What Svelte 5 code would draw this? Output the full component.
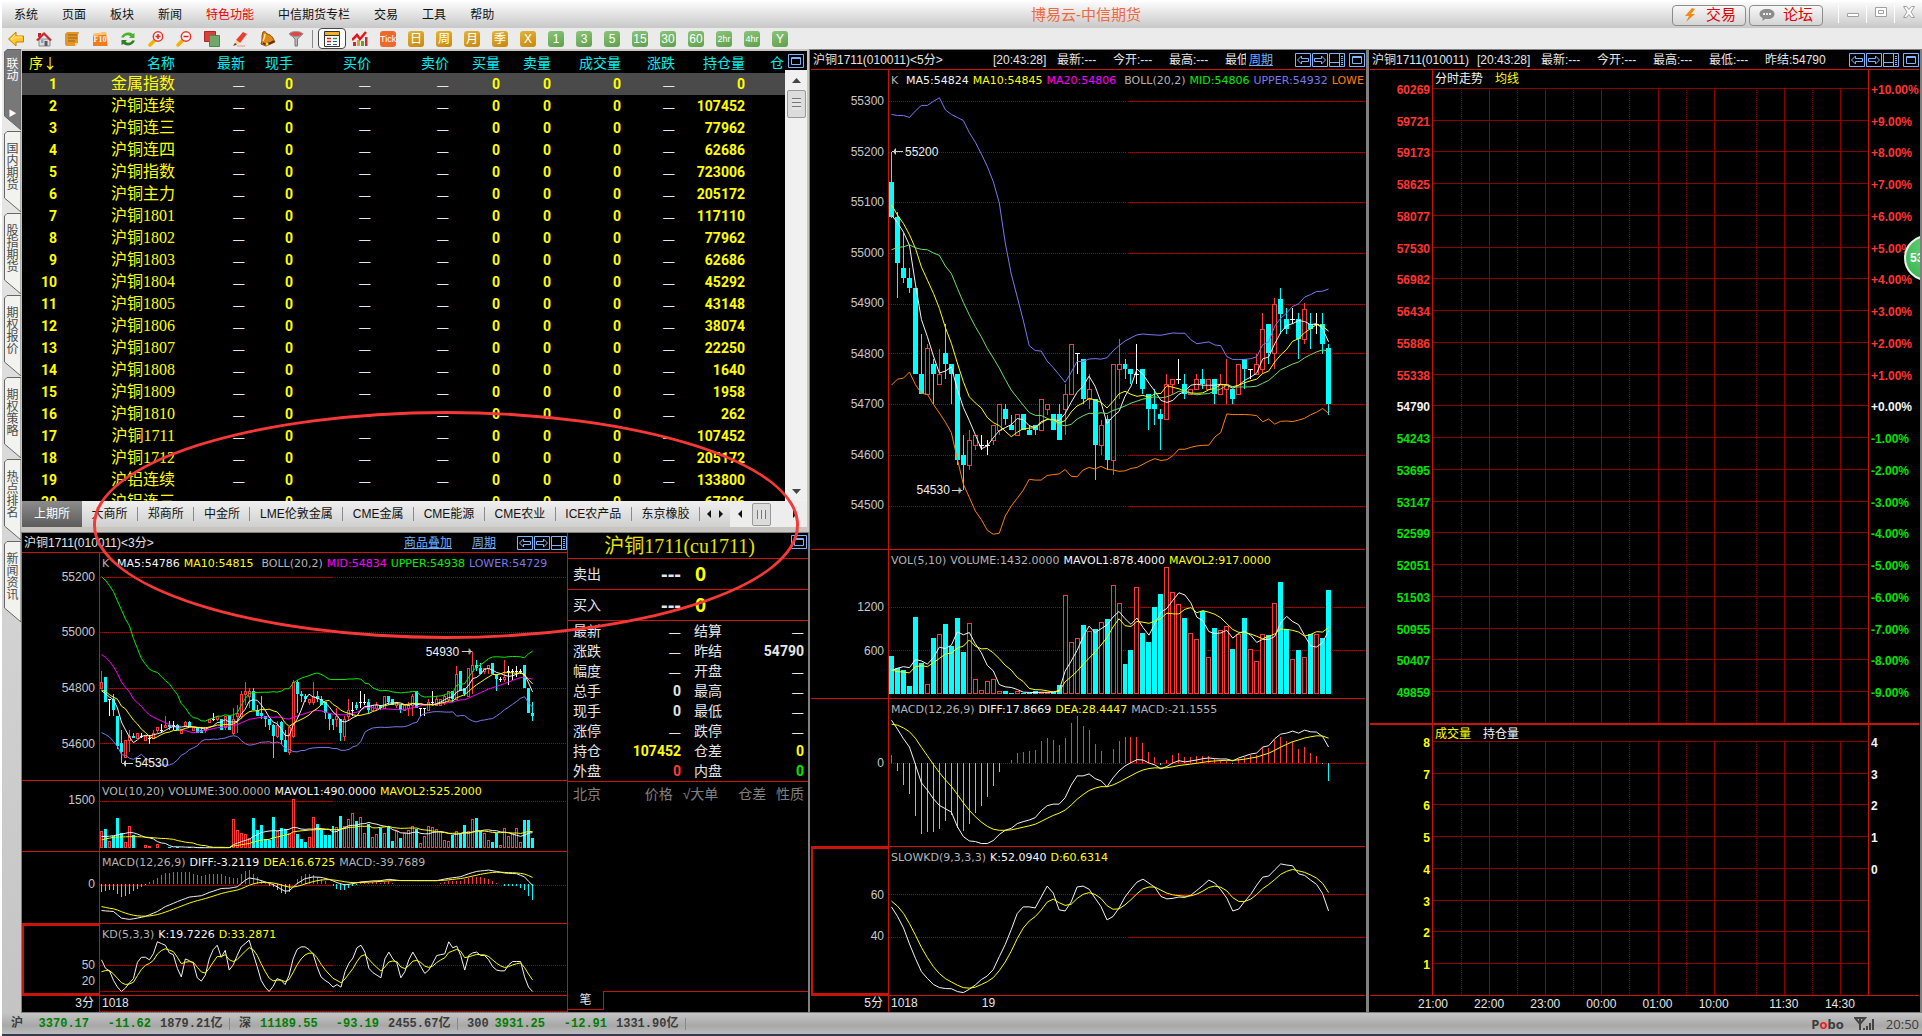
<script lang="ts">
	type Candle = [kind: string, high: number, top: number, bottom: number, low: number];
	type Line = { color: string; values: number[] };

	const menu = ['系统', '页面', '板块', '新闻', '特色功能', '中信期货专栏', '交易', '工具', '帮助'];
	const periods = ['Tick', '日', '周', '月', '季', 'X', '1', '3', '5', '15', '30', '60', '2hr', '4hr', 'Y'];
	const sideTabs = ['联动', '国内期货', '股指期货', '期权报价', '期权策略', '热点排名', '新闻资讯'];
	const markets = ['上期所', '大商所', '郑商所', '中金所', 'LME伦敦金属', 'CME金属', 'CME能源', 'CME农业', 'ICE农产品', '东京橡胶'];

	const contracts: [string, number][] = [
		['金属指数', 0],
		['沪铜连续', 107452],
		['沪铜连三', 77962],
		['沪铜连四', 62686],
		['沪铜指数', 723006],
		['沪铜主力', 205172],
		['沪铜1801', 117110],
		['沪铜1802', 77962],
		['沪铜1803', 62686],
		['沪铜1804', 45292],
		['沪铜1805', 43148],
		['沪铜1806', 38074],
		['沪铜1807', 22250],
		['沪铜1808', 1640],
		['沪铜1809', 1958],
		['沪铜1810', 262],
		['沪铜1711', 107452],
		['沪铜1712', 205172],
		['沪铝连续', 133800],
		['沪铝连三', 67206]
	];

	const quote = [
		['最新', '—', '', '结算', '—', ''],
		['涨跌', '—', '', '昨结', '54790', ''],
		['幅度', '—', '', '开盘', '—', ''],
		['总手', '0', '', '最高', '—', ''],
		['现手', '0', '', '最低', '—', ''],
		['涨停', '—', '', '跌停', '—', ''],
		['持仓', '107452', 'yellow', '仓差', '0', 'yellow'],
		['外盘', '0', 'red', '内盘', '0', 'green']
	];

	const indexes = [
		['沪', '3370.17', '-11.62', '1879.21亿'],
		['深', '11189.55', '-93.19', '2455.67亿'],
		['300', '3931.25', '-12.91', '1331.90亿']
	];

	const GREY = '#b4b4b4';
	const WHITE = '#f4f4f4';
	const YELLOW = '#ffff00';
	const GREEN = '#00f000';
	const MAGENTA = '#ff00ff';
	const BLUE = '#7878f0';
	const ORANGE = '#ff8000';

	// prices are offsets from 54000
	const five: Candle[] = [
		['d', 1200, 1140, 1070, 1070], ['d', 1080, 1070, 980, 910], ['d', 1040, 970, 950, 940], ['d', 970, 950, 930, 920],
		['d', 930, 930, 760, 760], ['d', 840, 760, 720, 720], ['u', 820, 810, 720, 720], ['d', 790, 780, 760, 700],
		['u', 810, 760, 740, 740], ['d', 860, 800, 780, 750], ['d', 780, 780, 760, 700], ['d', 760, 760, 590, 580],
		['d', 640, 600, 580, 530], ['u', 650, 630, 580, 570], ['u', 640, 640, 620, 610], ['w', 640, 620, 620, 610],
		['w', 630, 620, 620, 600], ['u', 660, 660, 630, 620], ['u', 700, 700, 650, 640], ['d', 700, 690, 670, 660],
		['d', 680, 660, 650, 650], ['u', 680, 680, 640, 640], ['d', 680, 680, 650, 650], ['d', 660, 650, 640, 640],
		['d', 660, 660, 650, 640], ['u', 710, 710, 650, 650], ['u', 700, 700, 690, 680], ['d', 680, 680, 650, 650],
		['d', 700, 680, 630, 630], ['u', 740, 720, 690, 640], ['u', 820, 820, 720, 720], ['w', 800, 800, 800, 760],
		['d', 790, 790, 710, 700], ['u', 760, 730, 710, 690], ['d', 710, 710, 620, 550], ['u', 670, 660, 620, 600],
		['d', 680, 670, 590, 570], ['u', 780, 780, 590, 560], ['u', 830, 780, 770, 710], ['d', 790, 780, 770, 750],
		['d', 770, 770, 760, 740], ['w', 820, 760, 760, 740], ['d', 770, 770, 730, 720], ['d', 720, 720, 690, 650],
		['d', 730, 700, 690, 660], ['d', 690, 680, 670, 610], ['u', 760, 740, 670, 670], ['u', 750, 750, 740, 720],
		['w', 790, 750, 750, 740], ['d', 760, 740, 720, 710], ['u', 730, 730, 720, 720], ['u', 760, 750, 730, 730],
		['d', 770, 750, 740, 730], ['u', 750, 750, 730, 730], ['d', 750, 750, 720, 700], ['u', 760, 740, 720, 720],
		['u', 790, 740, 730, 700], ['d', 730, 730, 710, 700], ['u', 780, 780, 720, 720], ['d', 790, 790, 770, 730],
		['w', 770, 770, 770, 750], ['u', 800, 780, 760, 760], ['u', 880, 850, 770, 760], ['d', 860, 860, 800, 780],
		['u', 910, 900, 800, 770], ['d', 930, 910, 880, 840], ['d', 890, 870, 850, 840], ['w', 890, 870, 870, 860],
		['d', 880, 870, 830, 790], ['u', 900, 890, 830, 820], ['d', 880, 860, 850, 810], ['w', 880, 860, 860, 840],
		['d', 880, 860, 820, 800], ['d', 820, 810, 700, 680]
	];

	const three: Candle[] = [
		['u', 860, 820, 800, 800], ['d', 840, 840, 750, 750], ['w', 760, 760, 760, 700], ['d', 780, 760, 720, 700],
		['d', 700, 700, 590, 580], ['d', 650, 600, 570, 530], ['u', 610, 610, 550, 550], ['u', 650, 630, 610, 570],
		['d', 640, 630, 620, 620], ['u', 640, 640, 620, 620], ['w', 640, 630, 630, 620], ['u', 630, 630, 610, 610],
		['w', 630, 620, 620, 600], ['u', 650, 640, 620, 620], ['u', 660, 660, 650, 640], ['w', 670, 650, 650, 640],
		['u', 700, 670, 660, 660], ['d', 680, 670, 660, 650], ['w', 680, 670, 670, 650], ['d', 670, 670, 650, 650],
		['u', 650, 650, 640, 640], ['u', 680, 680, 670, 660], ['d', 680, 680, 660, 660], ['u', 660, 660, 650, 650],
		['d', 660, 660, 640, 640], ['d', 660, 650, 640, 640], ['u', 660, 660, 650, 640], ['u', 690, 690, 680, 680],
		['w', 710, 690, 690, 680], ['u', 700, 700, 690, 680], ['d', 690, 690, 650, 650], ['u', 700, 700, 660, 650],
		['d', 700, 700, 650, 650], ['u', 730, 690, 640, 630], ['u', 740, 710, 700, 640], ['u', 790, 780, 700, 690],
		['u', 820, 790, 780, 740], ['u', 800, 790, 770, 730], ['d', 800, 790, 720, 720], ['d', 740, 720, 700, 700],
		['d', 770, 710, 700, 690], ['d', 700, 700, 690, 660], ['d', 690, 690, 670, 650], ['d', 670, 670, 630, 550],
		['u', 680, 670, 630, 620], ['d', 680, 680, 610, 600], ['d', 650, 610, 570, 570], ['u', 660, 660, 570, 560],
		['u', 830, 820, 630, 620], ['d', 830, 820, 780, 710], ['d', 790, 780, 770, 750], ['d', 780, 770, 760, 750],
		['u', 760, 760, 750, 740], ['u', 820, 770, 750, 740], ['d', 790, 770, 760, 750], ['d', 770, 760, 740, 740],
		['d', 750, 750, 710, 690], ['d', 710, 710, 690, 650], ['d', 690, 690, 670, 650], ['u', 730, 700, 690, 660],
		['d', 690, 690, 640, 610], ['u', 700, 690, 630, 610], ['u', 760, 720, 700, 680], ['w', 750, 720, 720, 700],
		['d', 750, 740, 730, 720], ['w', 790, 750, 750, 730], ['w', 780, 750, 750, 740], ['d', 760, 750, 720, 710],
		['u', 740, 740, 720, 720], ['u', 750, 740, 730, 720], ['d', 740, 740, 730, 720], ['u', 770, 770, 730, 730],
		['d', 770, 770, 750, 740], ['d', 760, 760, 740, 740], ['u', 750, 750, 740, 730], ['d', 740, 740, 720, 710],
		['u', 740, 740, 720, 720], ['u', 750, 740, 730, 700], ['u', 780, 770, 740, 700], ['d', 790, 790, 730, 730],
		['w', 730, 730, 730, 700], ['w', 730, 730, 730, 700], ['u', 760, 750, 720, 720], ['w', 790, 750, 750, 740],
		['u', 770, 760, 740, 740], ['u', 760, 760, 740, 740], ['u', 780, 770, 750, 740], ['u', 790, 790, 760, 750],
		['d', 790, 790, 760, 750], ['u', 880, 850, 760, 760], ['d', 860, 860, 790, 790], ['d', 800, 800, 780, 770],
		['u', 870, 870, 770, 770], ['u', 930, 880, 860, 780], ['d', 900, 880, 870, 860], ['d', 890, 870, 850, 850],
		['u', 870, 870, 860, 850], ['u', 880, 880, 870, 850], ['d', 890, 890, 850, 850], ['d', 850, 850, 830, 790],
		['w', 840, 830, 830, 820], ['u', 900, 840, 830, 820], ['w', 880, 860, 860, 810], ['w', 870, 860, 860, 830],
		['w', 880, 860, 860, 840], ['w', 870, 860, 860, 850], ['d', 880, 880, 800, 800], ['d', 800, 800, 710, 710],
		['d', 750, 710, 700, 680]
	];

	const fiveVolume = [
		520, 356, 328, 110, 1067, 424, 132, 780, 830, 971, 657, 1053, 575, 980, 200, 50, 173, 200, 36, 41, 14, 36, 14, 14, 36,
		32, 32, 32, 123, 1363, 720, 775, 958, 871, 903, 994, 1040, 1500, 1254, 410, 602, 1473, 848, 725, 1204, 1382, 1746,
		1404, 1240, 1053, 844, 761, 1149, 502, 917, 885, 939, 616, 834, 1053, 611, 447, 830, 821, 1254, 1546, 903, 474, 602,
		502, 834, 830, 780, 1432
	];

	const threeVolume = [
		517, 590, 207, 362, 960, 465, 186, 672, 414, 20, 20, 80, 50, 20, 134, 20, 20, 15, 15, 15, 10, 12, 15, 10, 12, 10, 10,
		12, 10, 12, 10, 15, 20, 900, 548, 465, 434, 310, 930, 548, 713, 269, 238, 1003, 517, 620, 590, 465, 1550, 434, 290,
		176, 331, 993, 755, 569, 414, 393, 672, 641, 1024, 672, 900, 1117, 827, 982, 465, 755, 331, 434, 620, 465, 672, 207,
		517, 310, 465, 548, 672, 600, 155, 362, 672, 641, 590, 517, 238, 207, 414, 517, 465, 724, 517, 900, 962, 517, 465,
		258, 176, 465, 100, 620, 362, 465, 620, 176, 869, 869, 300
	];

	const fiveDiff = [
		129, 102, 73, 48, -5, -60, -82, -108, -128, -138, -148, -192, -222, -235, -237, -243, -243, -234, -216, -203, -197,
		-183, -177, -172, -165, -144, -129, -124, -124, -105, -67, -39, -39, -33, -47, -54, -72, -45, -24, -9, 1, 10, 9, 0,
		-6, -18, -10, 0, 7, 3, 6, 9, 13, 15, 13, 12, 12, 6, 15, 21, 27, 30, 48, 52, 73, 87, 90, 96, 90, 99, 94, 93, 80, 48
	];

	const threeDiff = spread([
		[0, -80], [3, -83], [5, -103], [7, -107], [9, -103], [11, -98], [14, -83], [16, -68], [18, -58], [20, -48], [22, -39],
		[25, -35], [27, -25], [30, -13], [32, -12], [34, -8], [36, 12], [37, 19], [39, 15], [41, 7], [43, -1], [45, -15],
		[46, -21], [47, -20], [49, 2], [51, 17], [53, 22], [55, 21], [57, 15], [59, 5], [61, -2], [63, 2], [65, 7], [68, 10],
		[70, 11], [72, 15], [75, 11], [84, 11], [87, 18], [90, 23], [92, 32], [94, 39], [97, 43], [99, 39], [101, 34],
		[104, 32], [106, 22], [107, 9], [108, -3]
	]);

	const fiveK = [
		54, 49.6, 44.2, 36.7, 29.9, 23.7, 20.5, 17.7, 16.3, 15.8, 15.7, 14.4, 13.9, 15.5, 17.5, 20, 21.7, 24.7, 30.7, 36.4,
		43.4, 50.9, 54, 54, 53.5, 58.6, 63.7, 60.5, 52.6, 52.1, 56.3, 63.3, 63.7, 62.3, 58.1, 54.1, 47.9, 49.5, 53.5, 58.6,
		62.3, 65.6, 67, 65.1, 63.1, 58.9, 57.7, 58, 58.6, 58.4, 59.5, 61.7, 64, 66.5, 65.1, 62, 58.1, 52.1, 53, 56.6, 59.8,
		64.2, 67.9, 68.4, 71.3, 74.1, 73.6, 73.2, 69.5, 68.7, 66.5, 64.5, 60.2, 52.1
	];

	const threeK = [
		57, 47, 44, 33, 25, 20, 24, 30, 35, 54, 60, 60, 57, 64, 78, 76, 74, 65, 63, 47, 37, 58, 56, 53, 36, 32, 39, 58, 69,
		74, 60, 68, 45, 51, 62, 72, 76, 80, 64, 49, 33, 25, 20, 26, 35, 33, 28, 39, 58, 69, 72, 72, 69, 64, 49, 37, 33, 30,
		25, 28, 25, 43, 53, 59, 71, 74, 66, 47, 42, 39, 36, 58, 66, 58, 53, 36, 43, 57, 66, 58, 49, 41, 45, 53, 62, 63, 64,
		78, 71, 73, 62, 45, 62, 65, 66, 62, 62, 57, 49, 45, 44, 44, 51, 55, 55, 55, 37, 25, 20
	];

	function spread(keys: [number, number][]) {
		const out: number[] = [];
		for (let k = 0; k < keys.length - 1; k++) {
			const [a, va] = keys[k];
			const [b, vb] = keys[k + 1];
			for (let i = a; i < b; i++) out.push(va + ((vb - va) * (i - a)) / (b - a));
		}
		out.push(keys[keys.length - 1][1]);
		return out;
	}

	const close = (c: Candle) => (c[0] === 'd' ? c[3] : c[2]);

	function mean(values: number[], n: number, lead: number[]) {
		return values.map((_, i) => {
			if (i < n - 1) return lead[i] ?? values[i];
			return values.slice(i - n + 1, i + 1).reduce((a, b) => a + b, 0) / n;
		});
	}

	function smooth(values: number[], weight: number, start: number) {
		let last = start;
		return values.map((v, i) => (i === 0 ? last : (last = last * (1 - weight) + v * weight)));
	}

	function bands(closes: number[], mid: number[], lead: number[]) {
		const upper = closes.map((_, i) => {
			if (i < 19) return lead[i];
			const part = closes.slice(i - 19, i + 1);
			return mid[i] + 2 * Math.sqrt(part.reduce((s, v) => s + (v - mid[i]) ** 2, 0) / 20);
		});
		return { upper, lower: upper.map((u, i) => 2 * mid[i] - u) };
	}

	const c5 = five.map(close);
	const mid5 = mean(c5, 20, [1006, 1011, 1012, 1016, 1010, 1007, 1006, 1000, 995, 974, 959, 930, 902, 877, 854, 834, 811, 792, 772]);
	const boll5 = bands(c5, mid5, [1274, 1272, 1272, 1268, 1281, 1292, 1292, 1300, 1307, 1283, 1274, 1268, 1262, 1238, 1219, 1196, 1171, 1141, 1099]);
	const dea5 = smooth(fiveDiff, 0.2, 117);

	const c3 = three.map(close);
	const mid3 = mean(c3, 20, [920, 910, 896, 877, 852, 821, 803, 786, 761, 747, 734, 717, 704, 695, 688, 682, 675, 669, 662]);
	const boll3 = bands(c3, mid3, [1200, 1187, 1168, 1146, 1113, 1081, 1048, 1024, 978, 942, 906, 886, 868, 860, 856, 841, 827, 815, 795]);
	const dea3 = smooth(threeDiff, 0.2, -68);

	const hist = (diff: number[], dea: number[]) => diff.map((v, i) => 2 * (v - dea[i]));

	const chart3 = {
		step: 4,
		body: 3,
		width: 468,
		candles: three,
		period: '3分',
		times: [{ text: '1018', at: 0 }],
		panes: [
			{
				size: 230, range: [1285, 470], kind: 'candles', bars: [] as number[],
				ticks: [[1200, '55200'], [1000, '55000'], [800, '54800'], [600, '54600']],
				legend: [['K', GREY], ['MA5:54786', WHITE], ['MA10:54815', YELLOW], ['BOLL(20,2)', GREY], ['MID:54834', MAGENTA], ['UPPER:54938', GREEN], ['LOWER:54729', BLUE]],
				lines: [
					{ color: MAGENTA, values: mid3 },
					{ color: GREEN, values: boll3.upper },
					{ color: BLUE, values: boll3.lower },
					{ color: WHITE, values: mean(c3, 5, [790, 780, 768, 758]) },
					{ color: YELLOW, values: mean(c3, 10, [793, 788, 776, 767, 760, 735, 725, 705, 685]) }
				],
				notes: [{ text: '54530', x: 22, value: 530, left: false }, { text: '54930', x: 373, value: 930, left: true }]
			},
			{
				size: 71, range: [2110, -93], kind: 'volume', bars: threeVolume,
				ticks: [[1500, '1500']],
				legend: [['VOL(10,20)', GREY], ['VOLUME:300.0000', GREY], ['MAVOL1:490.0000', WHITE], ['MAVOL2:525.2000', YELLOW]],
				lines: [
					{ color: WHITE, values: mean(threeVolume, 10, [362, 365, 372, 390, 414, 440, 465, 490, 480]) },
					{ color: YELLOW, values: mean(threeVolume, 20, [258, 290, 310, 340, 345, 350, 355, 360, 360, 358, 355, 345, 335, 325, 315, 305, 300, 290, 275]) }
				],
				notes: []
			},
			{
				size: 72, range: [98, -118], kind: 'macd', bars: hist(threeDiff, dea3),
				ticks: [[0, '0']],
				legend: [['MACD(12,26,9)', GREY], ['DIFF:-3.2119', WHITE], ['DEA:16.6725', YELLOW], ['MACD:-39.7689', GREY]],
				lines: [{ color: WHITE, values: threeDiff }, { color: YELLOW, values: dea3 }],
				notes: []
			},
			{
				size: 72, range: [98.8, 15.8], kind: 'line', bars: [], picked: true,
				ticks: [[50, '50'], [20, '20']],
				legend: [['KD(5,3,3)', GREY], ['K:19.7226', WHITE], ['D:33.2871', YELLOW]],
				lines: [{ color: WHITE, values: threeK }, { color: YELLOW, values: smooth(threeK, 1 / 3, 43) }],
				notes: []
			}
		]
	};

	const chart5 = {
		step: 6,
		body: 5,
		width: 477,
		candles: five,
		period: '5分',
		times: [{ text: '1018', at: 0 }, { text: '19', at: 91 }],
		panes: [
			{
				size: 482, range: [1362, 413], kind: 'candles', bars: [] as number[],
				ticks: [[1300, '55300'], [1200, '55200'], [1100, '55100'], [1000, '55000'], [900, '54900'], [800, '54800'], [700, '54700'], [600, '54600'], [500, '54500']],
				legend: [['K', GREY], ['MA5:54824', WHITE], ['MA10:54845', YELLOW], ['MA20:54806', MAGENTA], ['BOLL(20,2)', GREY], ['MID:54806', GREEN], ['UPPER:54932', BLUE], ['LOWER:54679', ORANGE]],
				lines: [
					{ color: WHITE, values: mean(c5, 5, [1075, 1060, 1041, 1015]) },
					{ color: YELLOW, values: mean(c5, 10, [1095, 1075, 1058, 1036, 1009, 972, 946, 920, 890]) },
					{ color: '#6ce06c', values: mid5 },
					{ color: BLUE, values: boll5.upper },
					{ color: ORANGE, values: boll5.lower }
				],
				notes: [{ text: '55200', x: 3, value: 1200, left: false }, { text: '54530', x: 74, value: 530, left: true }]
			},
			{
				size: 148, range: [1984, -42], kind: 'volume', bars: fiveVolume,
				ticks: [[1200, '1200'], [600, '600']],
				legend: [['VOL(5,10)', GREY], ['VOLUME:1432.0000', GREY], ['MAVOL1:878.4000', WHITE], ['MAVOL2:917.0000', YELLOW]],
				lines: [
					{ color: WHITE, values: mean(fiveVolume, 5, [324, 356, 378, 365]) },
					{ color: YELLOW, values: mean(fiveVolume, 10, [333, 310, 305, 292, 378, 392, 378, 433, 492]) }
				],
				notes: []
			},
			{
				size: 148, range: [193, -251], kind: 'macd', bars: hist(fiveDiff, dea5),
				ticks: [[0, '0']],
				legend: [['MACD(12,26,9)', GREY], ['DIFF:17.8669', WHITE], ['DEA:28.4447', YELLOW], ['MACD:-21.1555', GREY]],
				lines: [{ color: WHITE, values: fiveDiff }, { color: YELLOW, values: dea5 }],
				notes: []
			},
			{
				size: 149, range: [82, 12.7], kind: 'line', bars: [], picked: true,
				ticks: [[60, '60'], [40, '40']],
				legend: [['SLOWKD(9,3,3,3)', GREY], ['K:52.0940', WHITE], ['D:60.6314', YELLOW]],
				lines: [{ color: WHITE, values: fiveK }, { color: YELLOW, values: smooth(fiveK, 1 / 3, 56.7) }],
				notes: []
			}
		]
	};

	const scale = (pane: any, v: number) => ((pane.range[0] - v) / (pane.range[0] - pane.range[1])) * pane.size;
	const percent = (pane: any, v: number) => (scale(pane, v) / pane.size) * 100;
	const path = (chart: any, pane: any, line: Line) =>
		line.values.map((v, i) => `${chart.body / 2 + i * chart.step},${scale(pane, v).toFixed(1)}`).join(' ');
	const snap = (v: number) => Math.round(v);

	// intraday grid
	const levels = [60269, 59721, 59173, 58625, 58077, 57530, 56982, 56434, 55886, 55338, 54790, 54243, 53695, 53147, 52599, 52051, 51503, 50955, 50407, 49859];
	const tone = (i: number) => (i < 10 ? 'up' : i === 10 ? 'flat' : 'down');
	const change = (i: number) => `${i <= 10 ? '+' : ''}${(10 - i).toFixed(2)}%`;
	const hours = [
		[1, ''], [2, '22:00'], [3, ''], [4, '23:00'], [5, ''], [6, '00:00'], [7, ''], [8, '01:00'],
		[9, ''], [10, '10:00'], [11.5, ''], [12.5, '11:30'], [13.5, ''], [14.5, '14:30']
	] as [number, string][];
	const hourX = (at: number) => (at / 15.5) * 100;
</script>

{#snippet boxIcon()}
	<button type="button" class="pane-btn" aria-label="最大化">
		<svg viewBox="0 0 16 14"><path d="M.5.5h15v13H.5zM3.5 3.5h9v7h-9zM3.5 4.5h9" /></svg>
	</button>
{/snippet}

{#snippet paneIcons()}
	<button type="button" class="pane-btn" aria-label="上一个">
		<svg viewBox="0 0 16 14"><path d="M.5.5h15v13H.5zM2.5 7l4-4v2.5h7v3h-7V11z" /></svg>
	</button>
	<button type="button" class="pane-btn" aria-label="下一个">
		<svg viewBox="0 0 16 14"><path d="M.5.5h15v13H.5zM13.5 7l-4-4v2.5h-7v3h7V11z" /></svg>
	</button>
	<button type="button" class="pane-btn" aria-label="布局">
		<svg viewBox="0 0 16 14"><path d="M.5.5h15v13H.5zM.5 9.5h10M10.5 1v12M12 3.5h2M12 5.5h2M12 7.5h2M12 9.5h2M12 11.5h2" /></svg>
	</button>
{/snippet}

{#snippet technical(chart: any)}
	<div class="technical">
		{#each chart.panes as pane}
			<div class="pane" style:flex-grow={pane.size}>
				<div class="scale" class:picked={pane.picked}>
					{#each pane.ticks as [value, text]}
						<span class="tick" class:low={text === '20'} style:top="{percent(pane, value)}%">{text}</span>
					{/each}
				</div>
				<div class="plot">
					<svg viewBox="0 0 {chart.width} {pane.size}" preserveAspectRatio="none" aria-hidden="true">
						{#each pane.ticks as [value]}
							<line class="dots" x1="0" x2={chart.width} y1={snap(scale(pane, value)) + 0.5} y2={snap(scale(pane, value)) + 0.5} />
						{/each}
						{#if pane.kind === 'candles'}
							{#each chart.candles as c, i}
								{@const x = i * chart.step}
								{@const mid = x + chart.body / 2}
								{@const top = snap(scale(pane, c[2]))}
								{@const bottom = snap(scale(pane, c[3]))}
								<g class={c[0]}>
									<line x1={mid} x2={mid} y1={scale(pane, c[1])} y2={c[0] === 'u' ? top : bottom} />
									<line x1={mid} x2={mid} y1={bottom} y2={scale(pane, c[4])} />
									{#if c[0] === 'w'}
										<line x1={x} x2={x + chart.body} y1={top + 0.5} y2={top + 0.5} />
									{:else if c[0] === 'u'}
										<rect x={x + 0.5} y={top + 0.5} width={chart.body - 1} height={Math.max(bottom - top, 1)} />
									{:else}
										<rect {x} y={top} width={chart.body} height={Math.max(bottom - top, 2)} />
									{/if}
								</g>
							{/each}
						{:else if pane.kind === 'volume'}
							{#each pane.bars as v, i}
								{@const top = snap(scale(pane, v))}
								{@const base = snap(scale(pane, 0))}
								{#if chart.candles[i][0] === 'd'}
									<rect class="fall" x={i * chart.step} y={Math.min(top, base - 1)} width={chart.body} height={Math.max(base - top, 1)} />
								{:else}
									<rect class="rise" x={i * chart.step + 0.5} y={Math.min(top, base - 1) + 0.5} width={chart.body - 1} height={Math.max(base - top - 1, 0)} />
								{/if}
							{/each}
						{:else if pane.kind === 'macd'}
							{#each pane.bars as v, i}
								{@const mid = i * chart.step + chart.body / 2}
								<line class={v > 0 ? 'rise' : 'cyan'} x1={mid} x2={mid} y1={scale(pane, 0)} y2={scale(pane, v)} />
							{/each}
						{/if}
						{#each pane.lines as line}
							<polyline points={path(chart, pane, line)} stroke={line.color} />
						{/each}
					</svg>
					<div class="legend">
						{#each pane.legend as [text, color]}
							<span class:mark={text === 'K'} class:boll={text.startsWith('BOLL')} style:color>{text}</span>
						{/each}
					</div>
					{#each pane.notes as note}
						<span class="note" class:flip={note.left} style:left="{(note.x / chart.width) * 100}%" style:top="{percent(pane, note.value)}%">
							<svg viewBox="0 0 11 7" aria-hidden="true"><path d="M0 3.5h11M3.5.5v6M2.5 1.5v4" /></svg>{note.text}
						</span>
					{/each}
				</div>
			</div>
		{/each}
		<div class="timeline">
			<span class="period">{chart.period}</span>
			<div class="times">
				{#each chart.times as time}
					<span style:left="{(time.at / chart.width) * 100}%">{time.text}</span>
				{/each}
			</div>
		</div>
	</div>
{/snippet}

<div class="app">
	<header class="titlebar">
		<nav>
			{#each menu as item}
				<button type="button" class:hot={item === '特色功能'}>{item}</button>
			{/each}
		</nav>
		<h1>博易云-中信期货</h1>
		<div class="title-right">
			<button type="button" class="pill">
				<svg viewBox="0 0 16 16" aria-hidden="true"><path d="M10 1L3 9h4l-3 6 9-8H9l4-5z" fill="#f08a1c" /></svg>交易
			</button>
			<button type="button" class="pill">
				<svg viewBox="0 0 16 16" aria-hidden="true"><path d="M8 2c4.5 0 7.5 2 7.5 5s-3 5-6.5 5c-1 0-2 0-2.5-.2L3.5 14v-3C1.5 10.2.5 8.700.5 7c0-3 3-5 7.5-5z" fill="#8c8c8c" /><path d="M4 6h2v2H4zM7 6h2v2H7zM10 6h2v2h-2z" fill="#eee" /></svg>论坛
			</button>
			<div class="window-btns">
				<button type="button" aria-label="最小化"><svg viewBox="0 0 12 12"><path d="M.5 7.5h11v3H.5z" /></svg></button>
				<button type="button" aria-label="还原"><svg viewBox="0 0 12 12"><path d="M.5 1.5h11v9H.5zM3.5 4.5h5v3h-5z" /></svg></button>
				<button type="button" aria-label="关闭"><svg viewBox="0 0 12 12"><path d="M.5.5h3L6 3.5 8.5.5h3L8 6l3.5 5.5h-3L6 8.5l-2.5 3h-3L4 6z" /></svg></button>
			</div>
		</div>
	</header>

	<div class="toolbar">
		<button type="button" aria-label="后退"><svg viewBox="0 0 16 16"><path d="M8 1L.5 8 8 15v-4h7.500V5H8z" fill="#ffc62e" stroke="#c98200" /><path d="M7 4L3 8l1 .5L8 6h6" fill="none" stroke="#ffe9a0" /></svg></button>
		<button type="button" aria-label="首页"><svg viewBox="0 0 16 16"><path d="M3 8h11v7H3z" fill="#dcdcdc" stroke="#8a8a8a" /><path d="M8.5 10h3v5h-3z" fill="#5c5c5c" /><path d="M2 2h3v4H2zM0 9l8-8 8 8-2 1-6-6-6 6z" fill="#c4262c" /><path d="M5 9h2.500v3H5z" fill="#7aa7c7" /></svg></button>
		<button type="button" aria-label="公告"><svg viewBox="0 0 16 16"><path d="M3 1h12l-1 3v8l-3 3H2l-1-2V3z" fill="#e0962a" /><path d="M4 4h9M4 7h9M4 10h7" stroke="#9b5f0e" /><path d="M14 12h-3v3z" fill="#f8d58c" /></svg></button>
		<button type="button" class="f10" aria-label="F10资料"><svg viewBox="0 0 16 16"><path d="M1 3l13-2 1.500 14H1z" fill="#ee7c1e" /><path d="M1 3l13-2 .2 2.500L1 5z" fill="#ffc873" /></svg><span>F10</span></button>
		<button type="button" aria-label="刷新"><svg viewBox="0 0 16 16"><path d="M1 6.500C3 1 10 .5 12.500 3L14.500 2v5H9l1.500-1.500C8.500 3.500 5 4 4 6.500z" fill="#4fae33" /><path d="M15 9.500C13 15 6 15.500 3.500 13L1.500 14V9H7l-1.500 1.500c2 2 5.500 1.500 6.500-1z" fill="#2f7f22" /></svg></button>
		<button type="button" aria-label="放大"><svg viewBox="0 0 16 16"><path d="M2 14l4.500-4.500" stroke="#f3b200" stroke-width="3.500" stroke-linecap="round" /><circle cx="10" cy="5.500" r="4.700" fill="#fff2f0" stroke="#e03b30" stroke-width="1.500" /><path d="M7.500 5.500h5M10 3v5" stroke="#e02020" stroke-width="1.500" /></svg></button>
		<button type="button" aria-label="缩小"><svg viewBox="0 0 16 16"><path d="M2 14l4.500-4.500" stroke="#f3b200" stroke-width="3.500" stroke-linecap="round" /><circle cx="10" cy="5.500" r="4.700" fill="#fff2f0" stroke="#e03b30" stroke-width="1.500" /><path d="M7.500 5.500h5" stroke="#e02020" stroke-width="1.500" /></svg></button>
		<button type="button" aria-label="叠加"><svg viewBox="0 0 16 16"><path d="M.5.5h11v10H.5z" fill="#d8403e" stroke="#b02525" /><path d="M5.500 4.500h10v11h-10z" fill="#6fa869" stroke="#4c8648" /></svg></button>
		<button type="button" aria-label="画线"><svg viewBox="0 0 16 16"><path d="M11 1l4 2-7 9-4-3z" fill="#e8402c" /><path d="M4 9l4 3-6 3z" fill="#ffcf8a" /><path d="M1 15l2-3 2 1.500z" fill="#444" /><path d="M5 15h8" stroke="#f09080" /></svg></button>
		<button type="button" aria-label="预警"><svg viewBox="0 0 16 16"><path d="M3 1c2-1 3 0 4 2 5 1 6 4 8 8l-9 4-5-2c2-4 0-7 2-12z" fill="#dd8a1c" stroke="#8a4a0a" /><path d="M3 12c3 2 7 1 11-2" fill="none" stroke="#5f2f05" stroke-width="2" /><path d="M5 3c0 3-1 5-2 7" stroke="#ffe08c" stroke-width="1.500" fill="none" /><circle cx="7" cy="13" r="1.500" fill="#ffd34d" /></svg></button>
		<button type="button" aria-label="筛选"><svg viewBox="0 0 16 16"><path d="M1.500 2.500L7 8v7h2.500V8L15 2.500z" fill="#b9b9b9" stroke="#777" /><ellipse cx="8" cy="3" rx="6.500" ry="2.500" fill="#e04646" stroke="#9c9c9c" /></svg></button>
		<i class="divider"></i>
		<button type="button" class="on" aria-label="报价表"><svg viewBox="0 0 16 16"><path d="M.5.5h15v15H.5z" fill="#fff" stroke="#333" /><path d="M1 1h14v3H1z" fill="#f0b020" /><path d="M1 4.500h14" stroke="#333" /><path d="M3 7.500h4M3 10.500h4" stroke="#d02020" stroke-width="1.500" /><path d="M9 7.500h4" stroke="#20a040" stroke-width="1.500" /><path d="M9 10.500h4M3 13.500h4M9 13.500h4" stroke="#3050b0" /></svg></button>
		<button type="button" aria-label="走势图"><svg viewBox="0 0 16 16"><path d="M1 11h3v4H1z" fill="#c03030" /><path d="M5 9h3v6H5z" fill="#e0a030" /><path d="M9 10h3v5H9z" fill="#60a040" /><path d="M13 6h2.500v9H13z" fill="#c03030" /><path d="M0 9l5-5 3 4 6-7" fill="none" stroke="#e01818" stroke-width="2.500" /></svg></button>
		{#each periods as item, i}
			<button type="button"><span class="chip" class:tick-chip={i === 0} class:minute={i > 5} class:small={item.length > 2}>{item}</span></button>
		{/each}
	</div>

	<main>
		<aside class="side-tabs">
			{#each sideTabs as tab, i}
				<button type="button" class:current={i === 0}>
					<svg viewBox="0 0 17 82" preserveAspectRatio="none" aria-hidden="true"><path d="M17 .5H3L.5 3v64L17 81z" /></svg>
					<span>{tab}</span>
					{#if i === 0}<b>▶</b>{/if}
				</button>
			{/each}
		</aside>

		<div class="left">
			<section class="quotes">
				<div class="quotes-body">
					<div class="table-clip">
						<table>
							<colgroup>
								<col class="w-no" /><col class="w-name" /><col class="w70" /><col class="w48" /><col class="w78" /><col class="w78" />
								<col class="w51" /><col class="w51" /><col class="w70" /><col class="w54" /><col class="w70" /><col />
							</colgroup>
							<thead>
								<tr>
									<th class="order">序↓</th><th>名称</th><th>最新</th><th>现手</th><th>买价</th><th>卖价</th>
									<th>买量</th><th>卖量</th><th>成交量</th><th>涨跌</th><th>持仓量</th><th class="cut">仓</th>
								</tr>
							</thead>
							<tbody>
								{#each contracts as [name, held], i}
									<tr class:active={i === 0}>
										<td>{i + 1}</td>
										<td class="name">{name}</td>
										<td class="dash">—</td>
										<td>0</td>
										<td class="dash">—</td>
										<td class="dash">—</td>
										<td>0</td>
										<td>0</td>
										<td>0</td>
										<td class="dash">—</td>
										<td>{held}</td>
										<td></td>
									</tr>
								{/each}
							</tbody>
						</table>
					</div>
					<div class="rail">
						<div class="rail-top">{@render boxIcon()}</div>
						<button type="button" class="arrow" aria-label="向上滚动"><svg viewBox="0 0 9 5"><path d="M0 5l4.500-5L9 5z" /></svg></button>
						<div class="thumb"></div>
						<button type="button" class="arrow end" aria-label="向下滚动"><svg viewBox="0 0 9 5"><path d="M0 0l4.500 5L9 0z" /></svg></button>
					</div>
				</div>
				<div class="markets">
					<div class="market-tabs">
						{#each markets as market, i}
							<button type="button" class:selected={i === 0}>{market}</button>
						{/each}
					</div>
					<div class="market-nav">
						<button type="button" aria-label="前一组"><svg viewBox="0 0 4 8"><path d="M4 0v8L0 4z" /></svg></button>
						<button type="button" aria-label="后一组"><svg viewBox="0 0 4 8"><path d="M0 0v8l4-4z" /></svg></button>
					</div>
					<div class="market-scroll">
						<button type="button" aria-label="向左滚动"><svg viewBox="0 0 4 8"><path d="M4 0v8L0 4z" /></svg></button>
						<div class="grip"></div>
						<button type="button" class="far" aria-label="向右滚动"><svg viewBox="0 0 4 8"><path d="M0 0v8l4-4z" /></svg></button>
					</div>
				</div>
			</section>

			<section class="detail">
				<div class="detail-chart">
					<div class="pane-head">
						<span class="title">沪铜1711(010011)&lt;3分&gt;</span>
						<a class="push" href="#overlay">商品叠加</a>
						<a class="spaced" href="#period">周期</a>
						<div class="pane-btns">{@render paneIcons()}</div>
					</div>
					{@render technical(chart3)}
				</div>
				<div class="quote">
					<div class="quote-title"><h2>沪铜1711(cu1711)</h2>{@render boxIcon()}</div>
					<div class="depth"><span>卖出</span><b class="price">---</b><b class="lots">0</b></div>
					<div class="depth"><span>买入</span><b class="price">---</b><b class="lots">0</b></div>
					<dl>
						{#each quote as [a, av, ac, b, bv, bc]}
							<dt>{a}</dt>
							<dd class={ac} class:dash={av === '—'}>{av}</dd>
							<dt>{b}</dt>
							<dd class={bc} class:dash={bv === '—'}>{bv}</dd>
						{/each}
					</dl>
					<div class="ticks-head">
						<span>北京</span><span class="col-price">价格</span><span>√大单</span><span class="col-diff">仓差</span><span>性质</span>
					</div>
					<div class="ticks-body"></div>
					<div class="ticks-tabs"><button type="button">笔</button><i></i></div>
				</div>
			</section>
			<div class="marker"></div>
		</div>

		<section class="middle">
			<div class="pane-head">
				<span class="title wide">沪铜1711(010011)&lt;5分&gt;</span>
				<div class="info">
					<span class="clock">[20:43:28]</span><span>最新:---</span><span>今开:---</span><span>最高:---</span><span>最低:---</span>
				</div>
				<a class="near" href="#period">周期</a>
				<div class="pane-btns">{@render paneIcons()}<i></i>{@render boxIcon()}</div>
			</div>
			{@render technical(chart5)}
		</section>

		<section class="right">
			<div class="pane-head">
				<span class="title">沪铜1711(010011)</span>
				<div class="info">
					<span class="clock">[20:43:28]</span><span>最新:---</span><span>今开:---</span><span>最高:---</span><span>最低:---</span><span>昨结:54790</span>
				</div>
				<div class="pane-btns">{@render paneIcons()}<i></i>{@render boxIcon()}</div>
			</div>
			<div class="intraday price-grid">
				<div class="axis">
					{#each levels as level, i}
						<span class={tone(i)} style:top="{(i / 20) * 100}%">{level}</span>
					{/each}
				</div>
				<div class="field">
					<p><span class="white">分时走势</span><span>均线</span></p>
					<div class="cells">
						{#each levels as level, i}
							<i class="h" style:top="{(i / 20) * 100}%"></i>
						{/each}
						{#each hours as [at, text]}
							<i class="v" class:dotted={!text} style:left="{hourX(at)}%"></i>
						{/each}
					</div>
				</div>
				<div class="axis after">
					{#each levels as level, i}
						<span class={tone(i)} style:top="{(i / 20) * 100}%">{change(i)}</span>
					{/each}
				</div>
			</div>
			<div class="intraday volume-grid">
				<div class="axis">
					{#each [8, 7, 6, 5, 4, 3, 2, 1] as n, i}
						<span class="vol" style:top="{(i / 8) * 100}%">{n}</span>
					{/each}
				</div>
				<div class="field">
					<p><span>成交量</span><span class="white">持仓量</span></p>
					<div class="cells">
						{#each [0, 1, 2, 3, 4, 5, 6, 7] as i}
							<i class="h" style:top="{(i / 8) * 100}%"></i>
						{/each}
						{#each hours as [at, text]}
							<i class="v" class:dotted={!text} style:left="{hourX(at)}%"></i>
						{/each}
					</div>
				</div>
				<div class="axis after">
					{#each [4, 3, 2, 1, 0] as n, i}
						<span class="flat" style:top="{(i / 8) * 100}%">{n}</span>
					{/each}
				</div>
			</div>
			<div class="hours">
				<div>
					<span style:left="0%">21:00</span>
					{#each hours.filter(([, text]) => text) as [at, text]}
						<span style:left="{hourX(at)}%">{text}</span>
					{/each}
				</div>
			</div>
			<div class="bubble">53</div>
		</section>
	</main>

	<footer>
		{#each indexes as [name, last, diff, amount]}
			<div class="index"><span>{name}</span><b>{last}</b><b>{diff}</b><em>{amount}</em></div>
		{/each}
		<div class="status">
			<span class="brand">P<i>o</i>bo</span>
			<svg viewBox="0 0 22 14" aria-hidden="true"><path d="M1 1h10L6 7zM6 1v12" fill="none" stroke="#444" stroke-width="2" /><path d="M9 11h2v2H9zM12 9h2v4h-2zM15 6h2v7h-2zM18 2h2v11h-2z" fill="#444" /></svg>
			<time>20:50</time>
		</div>
	</footer>
</div>

<style>
	:global(body) {
		margin: 0;
		background: #fff;
		overflow: hidden;
	}

	.app {
		--red: #c8140a;
		--cjk: 'Liberation Sans', 'Noto Sans CJK SC', sans-serif;
		display: flex;
		flex-direction: column;
		box-sizing: border-box;
		height: 100vh;
		min-height: 700px;
		padding: 2px 0 0 2px;
		font: 12px/14px var(--cjk);
		color: #111;
	}

	button {
		margin: 0;
		padding: 0;
		border: 0;
		background: none;
		font: inherit;
		color: inherit;
	}

	a {
		color: #6cb0ff;
	}

	i {
		font-style: normal;
	}

	/* title bar and toolbar */
	.titlebar {
		display: grid;
		grid-template-columns: 1fr auto 1fr;
		align-items: center;
		flex: none;
		height: 26px;
		background: linear-gradient(#fbfbfb, #c8c8c8);
	}

	nav {
		display: flex;
		gap: 24px;
		padding-left: 12px;
		white-space: nowrap;
	}

	nav .hot {
		color: #f00000;
	}

	h1 {
		margin: 0;
		padding-left: 248px;
		font-size: 15px;
		font-weight: 400;
		color: #f0683c;
	}

	.title-right {
		display: flex;
		justify-content: flex-end;
		gap: 3px;
	}

	.pill {
		display: flex;
		align-items: center;
		justify-content: center;
		gap: 8px;
		box-sizing: border-box;
		width: 74px;
		height: 21px;
		border: 1px solid #8c8c8c;
		border-radius: 4px;
		background: linear-gradient(#f8f8f8, #d4d4d4);
		font-size: 15px;
		color: #e00000;
		white-space: nowrap;
	}

	.pill svg {
		width: 16px;
		height: 16px;
	}

	.window-btns {
		display: flex;
		align-items: flex-start;
		margin-left: 12px;
	}

	.window-btns button {
		width: 28px;
		height: 18px;
		border-left: 1px solid #fff;
	}

	.window-btns svg {
		width: 12px;
		height: 12px;
		fill: #fff;
		stroke: #a0a0a0;
	}

	.toolbar {
		display: flex;
		align-items: center;
		flex: none;
		height: 21px;
		background: #ebebeb;
	}

	.toolbar button {
		display: flex;
		align-items: center;
		justify-content: center;
		box-sizing: border-box;
		width: 28px;
		height: 21px;
	}

	.toolbar svg {
		width: 16px;
		height: 16px;
	}

	.toolbar .on {
		border: 1px solid #444;
		border-radius: 4px;
		background: #fff;
	}

	.toolbar .f10 {
		display: grid;
	}

	.f10 svg,
	.f10 span {
		grid-area: 1 / 1;
	}

	.f10 span {
		padding-top: 3px;
		font: bold 8px/10px 'Liberation Serif', serif;
		color: #fff4dd;
	}

	.divider {
		width: 1px;
		height: 18px;
		margin: 0 5px 0 2px;
		background: #8a8a8a;
	}

	.chip {
		width: 16px;
		border-radius: 3px;
		background: linear-gradient(160deg, #e0b43c, #c8880c);
		font-size: 12px;
		line-height: 16px;
		color: #fff;
	}

	.chip.minute {
		background: linear-gradient(160deg, #8cc47c, #5ca04c);
	}

	.chip.tick-chip {
		background: #ee6a2c;
	}

	.chip.small {
		font-size: 9px;
	}

	/* workspace */
	main {
		display: grid;
		grid-template-columns: 19px 788fr 559fr 554fr;
		flex: 1;
		min-height: 0;
		color: #e6e6e6;
	}

	.side-tabs {
		display: flex;
		flex-direction: column;
		background: linear-gradient(#ececec, #d2d2d2 60%, #c4c4c4);
	}

	.side-tabs button {
		position: relative;
		display: flex;
		flex-direction: column;
		align-items: center;
		width: 19px;
		height: 82px;
		padding: 12px 0 0 2px;
		color: #4a4a4a;
	}

	.side-tabs svg {
		position: absolute;
		inset: 0 0 0 2px;
		width: 17px;
		height: 82px;
		fill: #f2f2ee;
		stroke: #666;
	}

	.side-tabs span {
		position: relative;
		width: 12px;
		line-height: 12px;
		word-break: break-all;
	}

	.side-tabs .current {
		padding-top: 9px;
		color: #fff;
	}

	.side-tabs .current svg {
		fill: #787878;
	}

	.side-tabs b {
		position: relative;
		margin-top: 25px;
		font-size: 8px;
		font-weight: 400;
	}

	.left {
		position: relative;
		display: grid;
		grid-template-rows: 483fr 481fr;
		min-width: 0;
		min-height: 0;
	}

	.quotes,
	.detail {
		display: flex;
		min-height: 0;
	}

	.quotes {
		flex-direction: column;
		border: 1px solid #c8c4c0;
		border-width: 2px 2px 5px 1px;
		background: #000;
	}

	.quotes-body {
		display: flex;
		flex: 1;
		min-height: 0;
	}

	.table-clip {
		flex: 1;
		min-width: 0;
		overflow: hidden;
	}

	table {
		width: 100%;
		border-collapse: collapse;
		table-layout: fixed;
	}

	.w-no { width: 35px; }
	.w-name { width: 118px; }
	.w48 { width: 48px; }
	.w51 { width: 51px; }
	.w54 { width: 54px; }
	.w70 { width: 70px; }
	.w78 { width: 78px; }

	th,
	td {
		height: 22px;
		padding: 0;
		text-align: right;
		line-height: 20px;
		white-space: nowrap;
		overflow: hidden;
	}

	th {
		font: 14px/20px 'Noto Sans CJK SC', sans-serif;
		color: #00f0f0;
	}

	th.order {
		padding-left: 7px;
		text-align: left;
		color: #ff0;
	}

	th.cut {
		padding-right: 1px;
	}

	td {
		font: bold 14px/20px Roboto, sans-serif;
		color: #ff0;
	}

	td.name {
		font: 16px/20px 'Liberation Serif', 'Noto Sans CJK SC', serif;
	}

	td.dash,
	dd.dash {
		font: 14px/20px 'Noto Sans CJK SC', sans-serif;
		color: #e6e6e6;
	}

	.active {
		background: #4a4a4a;
	}

	.rail {
		display: flex;
		flex-direction: column;
		align-items: center;
		width: 22px;
		background: #f0f0f0;
	}

	.rail-top {
		display: flex;
		align-items: center;
		justify-content: center;
		width: 22px;
		height: 19px;
		background: #000;
	}

	.arrow {
		height: 20px;
	}

	.arrow svg {
		display: block;
		width: 9px;
		height: 5px;
		fill: #444;
	}

	.arrow.end {
		margin-top: auto;
	}

	.thumb {
		box-sizing: border-box;
		width: 19px;
		height: 28px;
		padding: 7px 4px;
		border: 1px solid #989898;
		border-radius: 2px;
		background: repeating-linear-gradient(#777 0 1px, #e4e4e4 1px 4px) content-box, #dcdcdc;
	}

	.markets {
		display: flex;
		flex: none;
		height: 26px;
		background: linear-gradient(#f0f0f0, #cfcfcf);
		color: #111;
	}

	.market-tabs {
		display: flex;
		align-items: center;
		flex: 1;
		min-width: 0;
	}

	.market-tabs button {
		flex: 1 1 auto;
		height: 14px;
		border-right: 1px solid #8a8a8a;
		line-height: 14px;
		white-space: nowrap;
	}

	.market-tabs .selected {
		flex: 0 0 60px;
		height: 26px;
		border: 0;
		background: linear-gradient(#8c8c8c, #5c5c5c);
		color: #fff;
	}

	.market-nav {
		display: flex;
		align-items: center;
		justify-content: space-evenly;
		width: 30px;
	}

	.market-nav svg,
	.market-scroll svg {
		display: block;
		width: 4px;
		height: 8px;
		fill: #111;
	}

	.market-scroll {
		display: flex;
		align-items: center;
		box-sizing: border-box;
		width: 77px;
		padding: 0 10px 0 8px;
		background: #ededed;
	}

	.grip {
		box-sizing: border-box;
		width: 19px;
		height: 23px;
		margin-left: 10px;
		padding: 6px 4px;
		border: 1px solid #989898;
		border-radius: 2px;
		background: repeating-linear-gradient(90deg, #777 0 1px, #e4e4e4 1px 4px) content-box, #dcdcdc;
	}

	.far {
		margin-left: auto;
	}

	.marker {
		position: absolute;
		left: 9.1%;
		top: 37.6%;
		box-sizing: border-box;
		width: 89.6%;
		height: 23.6%;
		border: 3px solid #f83838;
		border-radius: 50%;
		pointer-events: none;
	}

	/* chart panels */
	.detail,
	.middle,
	.right {
		box-sizing: border-box;
		border: 1px solid #808080;
		background: #000;
	}

	.detail-chart {
		display: flex;
		flex-direction: column;
		flex: 1;
		min-width: 0;
		border-right: 1px solid var(--red);
	}

	.middle,
	.right {
		display: flex;
		flex-direction: column;
		min-width: 0;
		min-height: 0;
		padding: 0 1px;
		border-right-width: 2px;
	}

	.pane-head {
		display: flex;
		align-items: center;
		flex: none;
		height: 19px;
		padding-left: 2px;
		border-bottom: 1px solid var(--red);
		white-space: nowrap;
	}

	.title.wide {
		flex: 0 0 180px;
	}

	.push {
		margin-left: auto;
	}

	.spaced {
		margin: 0 21px 0 20px;
	}

	.near {
		margin: 0 22px 0 3px;
	}

	.info {
		display: flex;
		flex: 1;
		min-width: 0;
		overflow: hidden;
	}

	.info span {
		flex: 0 0 56px;
	}

	.info .clock {
		flex-basis: 64px;
	}

	.right .info {
		margin-left: 8px;
	}

	.pane-btns {
		display: flex;
		gap: 1px;
	}

	.pane-btns i {
		width: 2px;
	}

	.pane-btn svg {
		display: block;
		width: 16px;
		height: 14px;
		fill: none;
		stroke: #7cb4ff;
	}

	.technical {
		display: flex;
		flex-direction: column;
		flex: 1;
		min-height: 0;
	}

	.pane {
		display: flex;
		flex-basis: 0;
		box-sizing: border-box;
		min-height: 0;
		border-bottom: 1px solid var(--red);
	}

	.scale {
		position: relative;
		flex: 0 0 78px;
		box-sizing: border-box;
		border-right: 1px solid var(--red);
		font: 12px/14px 'Liberation Sans', sans-serif;
		color: #c8c8c8;
	}

	.scale.picked {
		border: 2px solid var(--red);
		border-right-width: 1px;
	}

	.tick {
		position: absolute;
		right: 4px;
		transform: translateY(-50%);
	}

	.tick.low {
		transform: translateY(-16px);
	}

	.plot {
		position: relative;
		flex: 1;
		min-width: 0;
		overflow: hidden;
	}

	.plot > svg {
		position: absolute;
		inset: 0;
		width: 100%;
		height: 100%;
		shape-rendering: crispEdges;
	}

	.plot polyline {
		fill: none;
		shape-rendering: auto;
	}

	.dots {
		stroke: #b00000;
		stroke-dasharray: 1 1;
	}

	.d,
	.d rect,
	.fall {
		stroke: #00ffff;
		fill: #00ffff;
	}

	.d rect,
	.fall {
		stroke: none;
	}

	.cyan {
		stroke: #00ffff;
	}

	.u,
	.rise {
		stroke: #ff3838;
		fill: #000;
	}

	.w {
		stroke: #fff;
	}

	.legend {
		position: absolute;
		left: 2px;
		top: 2px;
		display: flex;
		gap: 4px;
		font: 11px/18px 'DejaVu Sans', sans-serif;
		white-space: nowrap;
	}

	.mark {
		width: 11px;
	}

	.boll {
		margin-left: 4px;
	}

	.note {
		position: absolute;
		display: flex;
		align-items: center;
		gap: 2px;
		font: 12px/14px 'Liberation Sans', sans-serif;
		color: #f0f0f0;
		transform: translateY(-50%);
	}

	.note svg {
		width: 11px;
		height: 7px;
		fill: none;
		stroke: #d0d0d0;
	}

	.note.flip {
		flex-direction: row-reverse;
		transform: translate(-100%, -50%);
	}

	.note.flip svg {
		transform: rotate(180deg);
	}

	.timeline {
		display: flex;
		flex: none;
		height: 16px;
		line-height: 15px;
	}

	.period {
		flex: 0 0 78px;
		box-sizing: border-box;
		padding-right: 5px;
		border-right: 1px solid var(--red);
		text-align: right;
	}

	.times {
		position: relative;
		flex: 1;
	}

	.detail .times {
		border-bottom: 1px dotted #c00000;
	}

	.times span {
		position: absolute;
		padding-left: 2px;
	}

	/* quote */
	.quote {
		display: flex;
		flex-direction: column;
		width: 240px;
		font-size: 14px;
	}

	.quote-title {
		display: flex;
		align-items: flex-start;
		height: 25px;
		padding-right: 1px;
		border-bottom: 1px solid var(--red);
	}

	.quote-title h2 {
		flex: 1;
		margin: 0;
		font: 20px/26px 'Liberation Serif', 'Noto Sans CJK SC', serif;
		text-align: center;
		color: #e4e400;
	}

	.quote-title .pane-btn {
		margin-top: 2px;
	}

	.depth {
		display: grid;
		grid-template-columns: 54px 54px 1fr;
		align-items: center;
		height: 30px;
		padding-left: 5px;
		border-bottom: 1px solid var(--red);
	}

	.depth b {
		font: bold 20px/24px 'Liberation Sans', sans-serif;
	}

	.price {
		text-align: right;
	}

	.lots {
		padding-left: 14px;
		color: #ff0;
	}

	dl {
		display: grid;
		grid-template-columns: 38px 70px 54px 69px;
		margin: 0;
		padding: 0 5px;
		border-bottom: 1px solid var(--red);
		line-height: 20px;
	}

	dt:nth-of-type(even) {
		padding-left: 13px;
		white-space: nowrap;
	}

	dd {
		margin: 0;
		text-align: right;
		font: bold 14px/20px Roboto, sans-serif;
	}

	.yellow { color: #ff0; }
	.red { color: #ff3838; }
	.green { color: #00e600; }

	.ticks-head {
		display: flex;
		justify-content: space-between;
		padding: 0 4px 0 5px;
		line-height: 24px;
		color: #808080;
		white-space: nowrap;
	}

	.ticks-head .col-price {
		margin-left: 34px;
	}

	.ticks-head .col-diff {
		margin-left: 10px;
	}

	.ticks-body {
		flex: 1;
	}

	.ticks-tabs {
		display: flex;
		height: 21px;
		font-size: 12px;
	}

	.ticks-tabs button {
		width: 36px;
		height: 19px;
		border-right: 1px solid var(--red);
		border-bottom: 1px solid var(--red);
	}

	.ticks-tabs i {
		flex: 1;
		border-top: 1px solid var(--red);
	}

	/* intraday */
	.right {
		position: relative;
		overflow: hidden;
	}

	.intraday {
		display: flex;
		flex-basis: 0;
		min-height: 0;
		border-bottom: 2px solid var(--red);
	}

	.price-grid {
		flex-grow: 655;
	}

	.volume-grid {
		flex-grow: 271;
		border-bottom-width: 1px;
	}

	.axis {
		position: relative;
		flex: 0 0 62px;
		margin-top: 18px;
		font: bold 12px/14px 'Liberation Sans', sans-serif;
	}

	.axis span {
		position: absolute;
		right: 2px;
		margin-top: -5px;
	}

	.axis.after {
		flex-basis: 50px;
	}

	.axis.after span {
		left: 2px;
		right: auto;
	}

	.up { color: #ff3434; }
	.flat { color: #f4f4f4; }
	.down { color: #00e600; }
	.vol { color: #ff0; }

	.field {
		display: flex;
		flex-direction: column;
		flex: 1;
		border: solid var(--red);
		border-width: 0 1px;
	}

	.field p {
		display: flex;
		flex: none;
		gap: 12px;
		height: 18px;
		margin: 0;
		padding-left: 2px;
		line-height: 18px;
		color: #ff0;
	}

	.field p .white {
		color: #f4f4f4;
	}

	.volume-grid .axis {
		margin-top: 16px;
	}

	.volume-grid p {
		height: 16px;
	}

	.cells {
		position: relative;
		flex: 1;
	}

	.cells i {
		position: absolute;
		box-sizing: border-box;
	}

	.h {
		left: 0;
		right: 0;
		border-top: 1px solid #8c0000;
	}

	.v {
		top: 0;
		bottom: 0;
		border-left: 1px solid #8c0000;
	}

	.v.dotted {
		border-left-style: dotted;
	}

	.hours {
		flex: none;
		height: 16px;
		padding: 0 51px 0 63px;
	}

	.hours div {
		position: relative;
	}

	.hours span {
		position: absolute;
		transform: translateX(-50%);
		line-height: 16px;
	}

	.bubble {
		position: absolute;
		right: -30px;
		top: 185px;
		box-sizing: border-box;
		width: 46px;
		height: 46px;
		padding-left: 4px;
		border: 2px solid #e8f4e8;
		border-radius: 50%;
		background: radial-gradient(circle at 60% 30%, #6cd47c, #30b04c);
		font: bold 12px/42px 'Liberation Sans', sans-serif;
		color: #fff;
	}

	/* status bar */
	footer {
		display: flex;
		align-items: center;
		flex: none;
		height: 21px;
		border-bottom: 2px solid #343c4c;
		background: linear-gradient(#c4c4c4, #a8a8a8 60%, #bcbcbc);
		color: #3c3c3c;
	}

	.index {
		display: grid;
		grid-template-columns: 21px 57px 62px 1fr;
		box-sizing: border-box;
		width: 228px;
		height: 12px;
		padding-left: 9px;
		font: bold 12px/12px 'Liberation Mono', 'Noto Sans CJK SC', monospace;
		white-space: nowrap;
	}

	.index::after {
		content: '';
		grid-area: 1 / 5;
		width: 1px;
		background: #888;
	}

	.index b {
		text-align: right;
		color: #008000;
	}

	.index em {
		padding-left: 9px;
		font-style: normal;
	}

	.status {
		display: flex;
		align-items: center;
		gap: 10px;
		margin-left: auto;
		padding-right: 3px;
	}

	.brand {
		font: bold 13px/16px 'Open Sans', sans-serif;
	}

	.brand i {
		color: #f02020;
	}

	.status svg {
		width: 22px;
		height: 14px;
	}

	time {
		font: 13px/16px 'Open Sans', sans-serif;
	}
</style>
